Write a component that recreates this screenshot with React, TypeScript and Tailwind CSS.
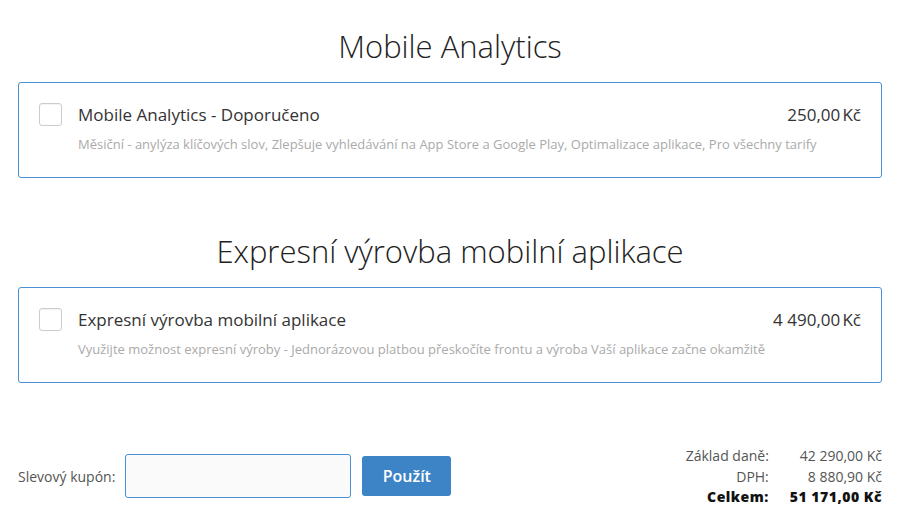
import { useState } from 'react';

type Item = {
    title: string;
    heading: string;
    price: string;
    desc: string;
};

const items: Item[] = [
    {
        heading: 'Mobile Analytics',
        title: 'Mobile Analytics - Doporučeno',
        price: '250,00\u202fKč',
        desc: 'Měsiční - anylýza klíčových slov, Zlepšuje vyhledávání na App Store a Google Play, Optimalizace aplikace, Pro všechny tarify',
    },
    {
        heading: 'Expresní výrovba mobilní aplikace',
        title: 'Expresní výrovba mobilní aplikace',
        price: '4 490,00\u202fKč',
        desc: 'Využijte možnost expresní výroby - Jednorázovou platbou přeskočíte frontu a výroba Vaší aplikace začne okamžitě',
    },
];

function App() {
    const [checked, setChecked] = useState<boolean[]>([false, false]);

    return (
        <div className="w-[900px] h-[518px] bg-white px-[18px] text-[#333] font-['Open_Sans',sans-serif] overflow-hidden">

            {items.map((it, i) => (
                <div key={i} className={i === 0 ? 'pt-[26px]' : 'pt-[53px]'}>
                    {/* nadpis sekce */}
                    <h2 className="text-center text-[31px] font-light leading-[40px] text-[#222]">{it.heading}</h2>

                    {/* box s položkou */}
                    <div className="mt-[16px] h-[96px] border border-[#4a90d4] rounded-[3px] pl-[20px] pr-[20px] pt-[19px] flex gap-[16px]">
                        <button
                            className="w-[23px] h-[23px] mt-[1px] border border-[#ccc] rounded-[3px] bg-white shrink-0 cursor-pointer shadow-[inset_0_1px_1px_rgba(0,0,0,0.05)]"
                            onClick={() => setChecked(checked.map((c, j) => (j === i ? !c : c)))}
                        >
                            {checked[i] && <span className="text-[#337ab7] text-sm">✓</span>}
                        </button>
                        <div className="flex-1 flex flex-col">
                            <div className="flex justify-between items-center">
                                <div className="text-[17px] leading-[26px] text-[#333]">{it.title}</div>
                                <div className="text-[17px] leading-[26px] text-[#333]">{it.price}</div>
                            </div>
                            <div className="mt-[8px] text-[13px] leading-[17px] text-[#aaa]">{it.desc}</div>
                        </div>
                    </div>
                </div>
            ))}

            {/* kupón a součty */}
            <div className="mt-[63px] flex justify-between items-start">
                <div className="flex items-center pt-[8px]">
                    <span className="text-[14px] text-[#555] mr-[10px]">Slevový kupón:</span>
                    <input className="w-[226px] h-[44px] border border-[#4a90d4] rounded-[3px] bg-[#fafafa] outline-none px-2" />
                    <button className="ml-[11px] w-[89px] h-[40px] rounded-[3px] bg-[#3d84c6] text-white text-[16px] font-semibold cursor-pointer">
                        Použít
                    </button>
                </div>
                <div className="grid grid-cols-[auto_auto] gap-x-[21px] text-[14px] leading-[20.5px] text-right">
                    <div className="text-[#555]">Základ daně:</div>
                    <div className="text-[#555]">42 290,00&nbsp;Kč</div>
                    <div className="text-[#555]">DPH:</div>
                    <div className="text-[#555]">8 880,90&nbsp;Kč</div>
                    <div className="font-extrabold tracking-[0.5px] text-[#111]">Celkem:</div>
                    <div className="font-extrabold tracking-[0.5px] text-[#111]">51 171,00&nbsp;Kč</div>
                </div>
            </div>

        </div>
    );
}

export default App;
